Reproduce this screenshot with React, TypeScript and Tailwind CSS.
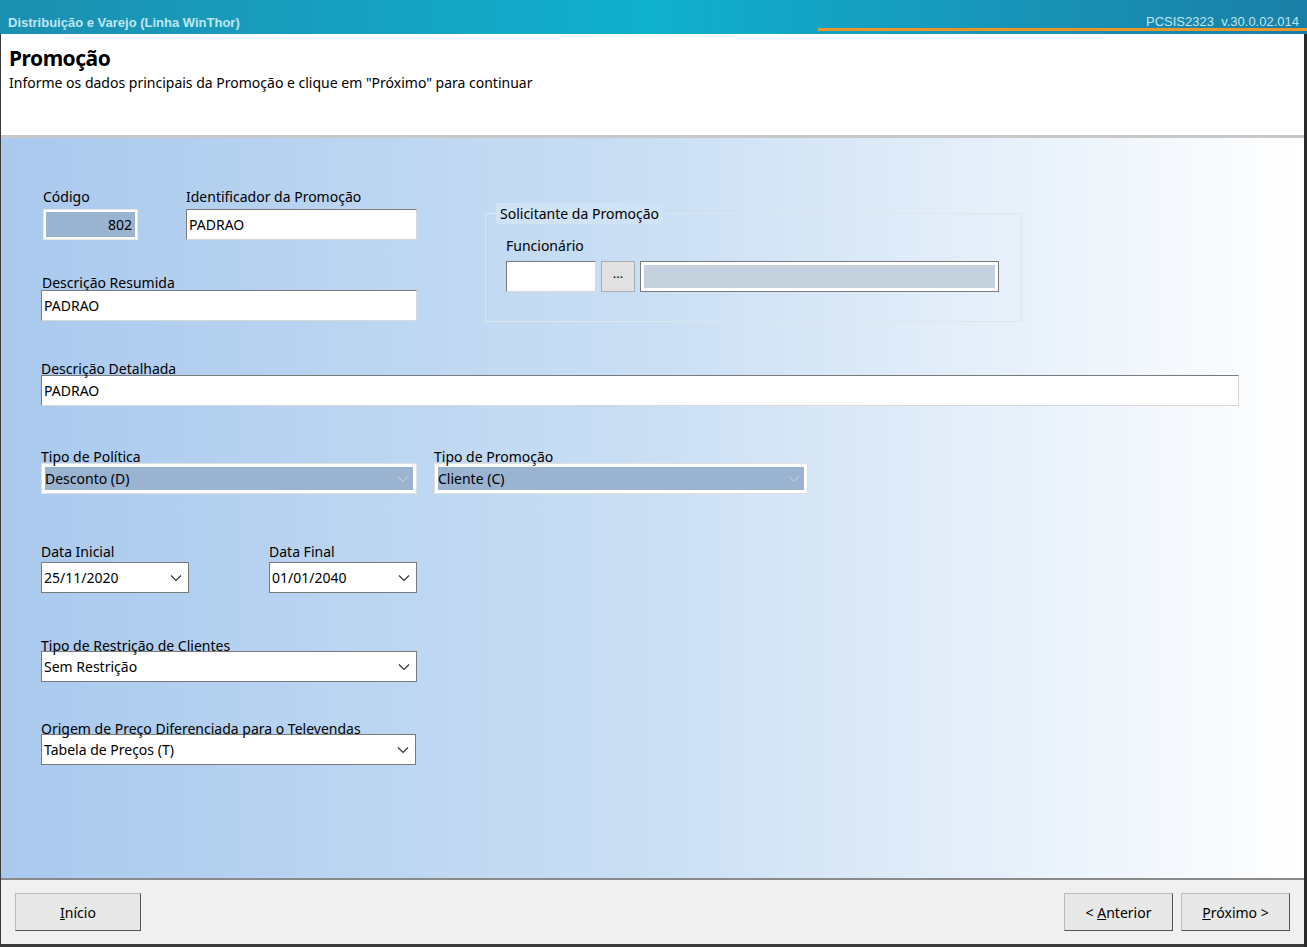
import React from "react";

const Chev = () => (
  <svg width="12" height="8" viewBox="0 0 12 8" className="shrink-0"><path d="M1 1.5 L6 6.5 L11 1.5" fill="none" stroke="#333" strokeWidth="1.2" /></svg>
);

const Label = ({ children, cls = "" }: { children: React.ReactNode; cls?: string }) => (
  <div className={"text-[14px] leading-[18px] text-black " + cls}>{children}</div>
);

const Input = ({ value, w, cls = "" }: { value: string; w: string; cls?: string }) => (
  <div className={"h-[31px] bg-white border border-[#7a7a7a] border-r-[#d8d8d8] border-b-[#d8d8d8] flex items-center px-[2px] text-[14px] " + w + " " + cls}>{value}</div>
);

const Combo = ({ value, w }: { value: string; w: string }) => (
  <div className={"h-[31px] bg-white border border-[#7a7a7a] flex items-center justify-between pl-[2px] pr-[6px] text-[14px] " + w}>
    <span>{value}</span><Chev />
  </div>
);

const Disabled = ({ value, w }: { value: string; w: string }) => (
  <div className={"h-[31px] bg-white border border-[#e0e0e0] p-[3px] " + w}>
    <div className="h-full bg-[#9ab3d1] flex items-center justify-between pr-[4px] text-[14px]">
      <span>{value}</span>
      <svg width="12" height="8" viewBox="0 0 12 8"><path d="M1 1.5 L6 6.5 L11 1.5" fill="none" stroke="#b8c8dc" strokeWidth="1.2" /></svg>
    </div>
  </div>
);

export default function App() {
  return (
    <div className="w-[1307px] h-[947px] overflow-hidden flex flex-col bg-[#f0f0f0]" style={{ fontFamily: '"Noto Sans", "DejaVu Sans", sans-serif' }}>
      <div className="h-[34px] relative bg-gradient-to-r from-[#1b8fb0] via-[#0fb0cf] to-[#1a7fa6] flex items-end justify-between px-[8px] pb-[2px] shrink-0">
        <span className="text-[13px] font-bold text-[#bfe6f2]" style={{ fontFamily: '"Liberation Sans", sans-serif' }}>Distribuição e Varejo (Linha WinThor)</span>
        <span className="text-[13px] text-[#bfe6f2] pb-[1px]" style={{ fontFamily: '"Liberation Sans", sans-serif' }}>PCSIS2323&nbsp; v.30.0.02.014</span>
        <div className="absolute left-[818px] right-0 bottom-[3px] h-[3px] bg-[#e8952a]" />
      </div>
      <div className="flex-1 flex flex-col border-l border-r-[3px] border-[#3a3a3a] border-r-[#2a2a2a]">
        <div className="h-[104px] bg-white px-[8px] pt-[10px] border-b-[3px] border-[#c8c8c8] shrink-0">
          <div className="text-[21px] font-bold leading-[28px] tracking-[-0.5px]">Promoção</div>
          <div className="text-[14px] leading-[20px] mt-[1px]">Informe os dados principais da Promoção e clique em "Próximo" para continuar</div>
        </div>
        <div className="h-[742px] bg-gradient-to-r from-[#a9c9ee] via-[#cadff4] to-[#ffffff] border-b-2 border-[#8a8a8a] pl-[40px] pt-[50px]">
          <div className="flex">
            <div className="flex flex-col">
              <div className="flex">
                <div className="ml-[2px]">
                  <Label>Código</Label>
                  <div className="mt-[3px] h-[31px] w-[95px] border border-[#e6e6e6] bg-white p-[2px]"><div className="h-full bg-[#9ab3d1] flex items-center justify-end pr-[3px] text-[14px]">802</div></div>
                </div>
                <div className="ml-[48px]">
                  <Label>Identificador da Promoção</Label>
                  <Input value="PADRAO" w="w-[231px]" cls="mt-[3px]" />
                </div>
              </div>
              <Label cls="mt-[34px] ml-[1px]">Descrição Resumida</Label>
              <Input value="PADRAO" w="w-[376px]" cls="mt-[-2px]" />
            </div>
            <div className="ml-[68px] mt-[25px] w-[537px] h-[109px] border border-[#dde6ef] rounded-[2px] relative pl-[20px] pt-[23px]">
              <div className="absolute left-[10px] top-[-11px] px-[4px] text-[14px] bg-[#d0e2f5]">Solicitante da Promoção</div>
              <Label>Funcionário</Label>
              <div className="flex mt-[6px] gap-[5px]">
                <Input value="" w="w-[90px]" />
                <div className="h-[31px] w-[34px] bg-[#e1e1e1] border border-[#adadad] flex items-center justify-center text-[13px] leading-none pb-[6px]">...</div>
                <div className="h-[31px] w-[359px] border border-[#7a7a7a] bg-white p-[3px]"><div className="h-full bg-[#c5d2de]" /></div>
              </div>
            </div>
          </div>
          <Label cls="mt-[38px]">Descrição Detalhada</Label>
          <Input value="PADRAO" w="w-[1198px]" cls="mt-[-3px]" />
          <div className="flex mt-[42px] gap-[17px]">
            <div><Label>Tipo de Política</Label><div className="mt-[-3px]"><Disabled value="Desconto (D)" w="w-[376px]" /></div></div>
            <div><Label>Tipo de Promoção</Label><div className="mt-[-3px]"><Disabled value="Cliente (C)" w="w-[374px]" /></div></div>
          </div>
          <div className="flex mt-[49px] gap-[80px]">
            <div><Label>Data Inicial</Label><div className="mt-[1px]"><Combo value="25/11/2020" w="w-[148px]" /></div></div>
            <div><Label>Data Final</Label><div className="mt-[1px]"><Combo value="01/01/2040" w="w-[148px]" /></div></div>
          </div>
          <Label cls="mt-[44px]">Tipo de Restrição de Clientes</Label>
          <div className="mt-[-4px]"><Combo value="Sem Restrição" w="w-[376px]" /></div>
          <Label cls="mt-[38px]">Origem de Preço Diferenciada para o Televendas</Label>
          <div className="mt-[-4px]"><Combo value="Tabela de Preços (T)" w="w-[375px]" /></div>
        </div>
        <div className="flex-1 bg-[#f0f0f0] flex items-start justify-between pl-[14px] pr-[14px] pt-[13px] border-b-[3px] border-[#3a3a3a]">
          <button className="h-[38px] w-[126px] bg-[#e8e8e8] border border-[#bbb] border-r-[#555] border-b-[#555] text-[14px]"><u>I</u>nício</button>
          <div className="flex gap-[8px]">
            <button className="h-[38px] w-[109px] bg-[#e8e8e8] border border-[#bbb] border-r-[#555] border-b-[#555] text-[14px]">&lt; <u>A</u>nterior</button>
            <button className="h-[38px] w-[109px] bg-[#e8e8e8] border border-[#bbb] border-r-[#555] border-b-[#555] text-[14px]"><u>P</u>róximo &gt;</button>
          </div>
        </div>
      </div>
    </div>
  );
}
